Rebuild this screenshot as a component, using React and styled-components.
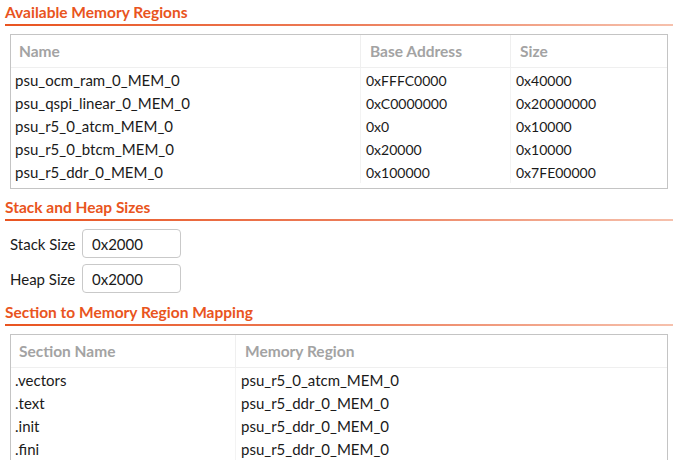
import React from 'react';
import styled, {createGlobalStyle} from 'styled-components';

const GlobalStyle = createGlobalStyle`
  html, body {
    margin: 0;
    padding: 0;
    background: #ffffff;
  }
  body {
    font-family: Lato, "Noto Sans", "DejaVu Sans", sans-serif;
    color: #1a1a1a;
    font-size: 15px;
  }
`;

const memoryRegions = [
  {name: 'psu_ocm_ram_0_MEM_0', base: '0xFFFC0000', size: '0x40000'},
  {name: 'psu_qspi_linear_0_MEM_0', base: '0xC0000000', size: '0x20000000'},
  {name: 'psu_r5_0_atcm_MEM_0', base: '0x0', size: '0x10000'},
  {name: 'psu_r5_0_btcm_MEM_0', base: '0x20000', size: '0x10000'},
  {name: 'psu_r5_ddr_0_MEM_0', base: '0x100000', size: '0x7FE00000'},
];

const sectionMapping = [
  {section: '.vectors', region: 'psu_r5_0_atcm_MEM_0'},
  {section: '.text', region: 'psu_r5_ddr_0_MEM_0'},
  {section: '.init', region: 'psu_r5_ddr_0_MEM_0'},
  {section: '.fini', region: 'psu_r5_ddr_0_MEM_0'},
];

const Page = styled.div`
  width: 673px;
  height: 460px;
  overflow: hidden;
  padding-left: 5px;
  box-sizing: border-box;
`;

const SectionTitle = styled.div`
  font-weight: 700;
  font-size: 15.5px;
  line-height: 20px;
  color: #e95420;
  padding-top: ${p => p.$top}px;
  padding-bottom: 2px;
  border-bottom: 2px solid transparent;
  border-image: linear-gradient(to right, #e95420, #ec7b57 50%, #f6c1ad) 1;
`;

const Table = styled.div`
  margin: 8px 5px 0 5px;
  border: 1px solid #c4c4c4;
  display: grid;
  grid-template-columns: ${p => p.$cols};
  padding-bottom: ${p => p.$bottom}px;
`;

const HeadCell = styled.div`
  height: 32px;
  line-height: 32px;
  padding-left: ${p => (p.$first ? 8 : 9)}px;
  font-weight: 700;
  font-size: 15.5px;
  color: #a3a3a3;
  border-bottom: 1px solid #efefef;
  border-left: ${p => (p.$first ? 'none' : '1px solid #efefef')};
`;

const Cell = styled.div`
  height: 23px;
  line-height: 25px;
  padding-left: ${p => (p.$first ? 4 : 5)}px;
  font-size: ${p => (p.$hex ? 14 : 15)}px;
  white-space: nowrap;
  border-left: ${p => (p.$first ? 'none' : '1px solid #f3f3f3')};
`;

const Filler = styled.div`
  border-left: ${p => (p.$first ? 'none' : '1px solid #f3f3f3')};
`;

const Fields = styled.div`
  display: flex;
  flex-direction: column;
  gap: 6px;
  padding: 8px 0 0 5px;
`;

const FieldRow = styled.label`
  display: flex;
  align-items: center;
`;

const FieldLabel = styled.span`
  width: 72px;
`;

const Input = styled.input`
  width: 99px;
  height: 29px;
  box-sizing: border-box;
  border: 1px solid #c9c9c9;
  border-radius: 4px;
  padding: 0 9px;
  font-family: inherit;
  font-size: 15px;
  color: #1a1a1a;
  outline: none;
`;

function DataTable({cols, columns, rows, bottom}) {
  return (
    <Table $cols={cols} $bottom={bottom}>
      {columns.map((c, i) => (
        <HeadCell key={c.key} $first={i === 0}>{c.label}</HeadCell>
      ))}
      {rows.map((row, r) =>
        columns.map((c, i) => (
          <Cell key={r + c.key} $first={i === 0} $hex={c.hex}>{row[c.key]}</Cell>
        ))
      )}
      {bottom > 0 && columns.map((c, i) => <Filler key={'f' + c.key} $first={i === 0} />)}
    </Table>
  );
}

export default function App() {
  return (
    <Page>
      <GlobalStyle />
      <SectionTitle $top={2}>Available Memory Regions</SectionTitle>
      <DataTable
        cols="349px 150px 1fr"
        columns={[
          {key: 'name', label: 'Name'},
          {key: 'base', label: 'Base Address', hex: true},
          {key: 'size', label: 'Size', hex: true},
        ]}
        rows={memoryRegions}
        bottom={5}
      />
      <SectionTitle $top={8}>Stack and Heap Sizes</SectionTitle>
      <Fields>
        <FieldRow>
          <FieldLabel>Stack Size</FieldLabel>
          <Input defaultValue="0x2000" />
        </FieldRow>
        <FieldRow>
          <FieldLabel>Heap Size</FieldLabel>
          <Input defaultValue="0x2000" />
        </FieldRow>
      </Fields>
      <SectionTitle $top={9}>Section to Memory Region Mapping</SectionTitle>
      <DataTable
        cols="224px 1fr"
        columns={[
          {key: 'section', label: 'Section Name'},
          {key: 'region', label: 'Memory Region'},
        ]}
        rows={sectionMapping}
        bottom={0}
      />
    </Page>
  );
}
